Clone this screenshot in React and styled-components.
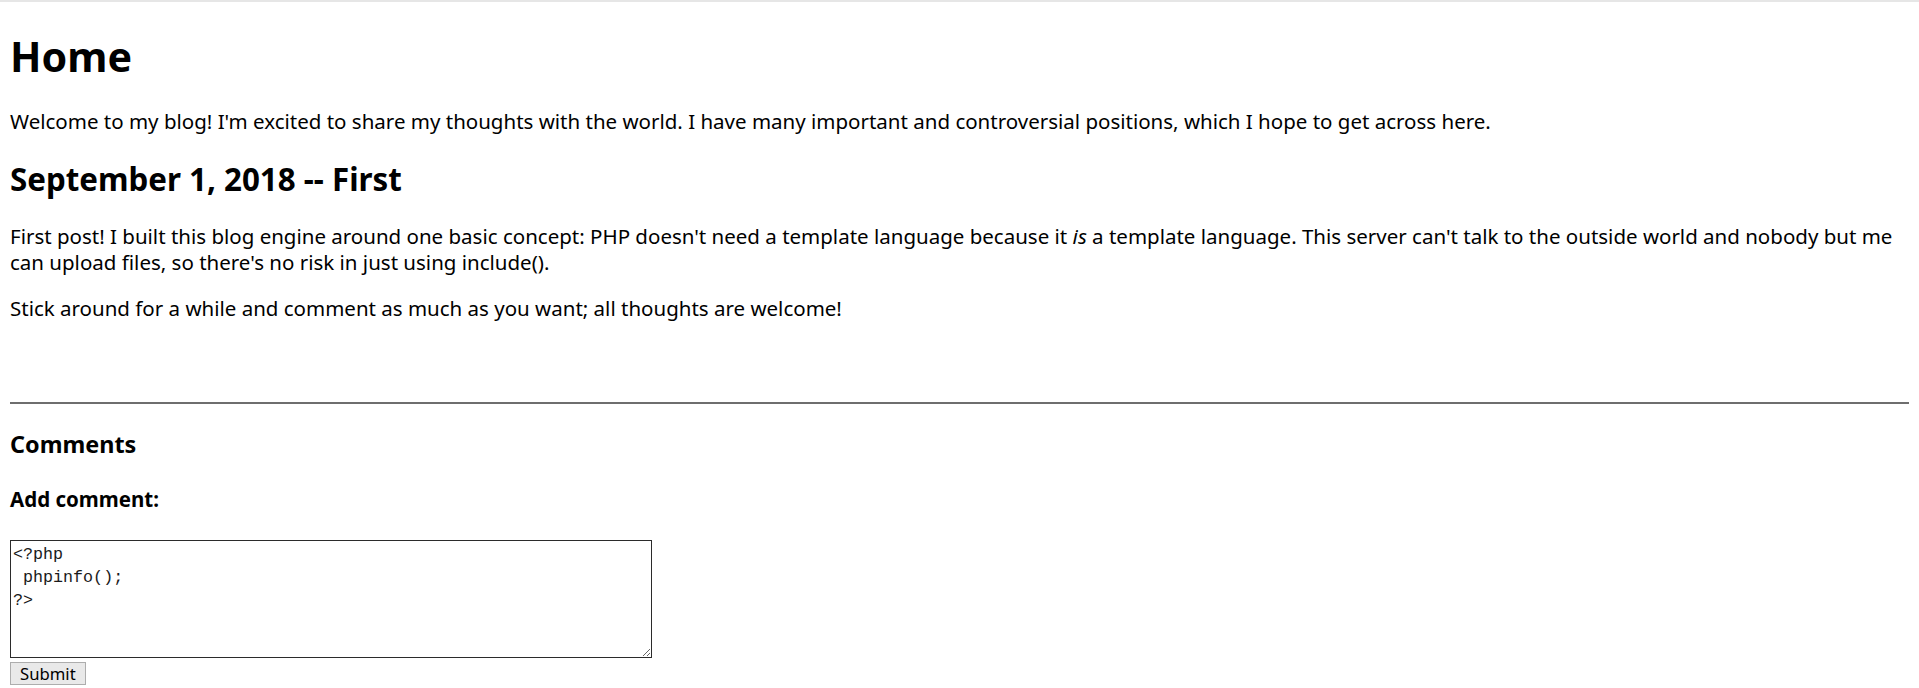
import React from "react";
import styled, { createGlobalStyle } from "styled-components";

const GlobalStyle = createGlobalStyle`
  html, body {
    margin: 0;
    padding: 0;
    background: #ffffff;
  }
  body {
    font-family: "Noto Sans", "Open Sans", sans-serif;
    font-size: 20.5px;
    color: #000000;
  }
`;

const TopEdge = styled.div`
  height: 2px;
  background: #e6e6e6;
`;

const Page = styled.div`
  padding: 0 10px 10px;
  display: flow-root;
`;

const Title = styled.h1`
  font-size: 41.2px;
  line-height: 52px;
  font-weight: 700;
  margin: 28px 0 26px;
`;

const PostTitle = styled.h2`
  font-size: 31.3px;
  line-height: 40px;
  font-weight: 700;
  margin: 25px 0 24px;
`;

const Text = styled.p`
  font-size: 20.5px;
  line-height: 26px;
  margin: 20px 0;
`;

const Divider = styled.hr`
  border: 0;
  border-top: 2px solid #6e6e6e;
  margin: 81px 0 25px;
  height: 0;
`;

const SectionTitle = styled.h3`
  font-size: 23.4px;
  line-height: 30px;
  font-weight: 700;
  margin: 25px 0 27px;
`;

const FormTitle = styled.h4`
  font-size: 20.5px;
  line-height: 26px;
  font-weight: 700;
  margin: 27px 0 28px;
`;

const CommentForm = styled.form`
  display: flex;
  flex-direction: column;
  align-items: flex-start;
  gap: 4px;
`;

const CodeBox = styled.textarea`
  box-sizing: border-box;
  width: 642px;
  height: 118px;
  margin: 0;
  padding: 2px 2px;
  border: 1px solid #2b2b2b;
  font-family: "Liberation Mono", monospace;
  font-size: 16.7px;
  line-height: 23px;
  color: #1a1a1a;
  outline: none;
  resize: both;
`;

const SubmitButton = styled.button`
  box-sizing: border-box;
  height: 23px;
  padding: 0 9px;
  font-family: "Noto Sans", "Open Sans", sans-serif;
  font-size: 16.7px;
  line-height: 20px;
  color: #000;
  background: #e9e9e9;
  border: 1px solid #adadad;
  border-radius: 0;
`;

const code = `<?php
 phpinfo();
?>`;

export default function App() {
  const placeCaret = (e) => {
    const end = e.target.value.length;
    e.target.setSelectionRange(end, end);
  };

  return (
    <>
      <GlobalStyle />
      <TopEdge />
      <Page>
        <Title>Home</Title>
        <Text>
          Welcome to my blog! I'm excited to share my thoughts with the world.
          I have many important and controversial positions, which I hope to
          get across here.
        </Text>

        <PostTitle>September 1, 2018 -- First</PostTitle>
        <Text>
          First post! I built this blog engine around one basic concept: PHP
          doesn't need a template language because it <em>is</em> a template
          language. This server can't talk to the outside world and nobody but
          me can upload files, so there's no risk in just using include().
        </Text>
        <Text>
          Stick around for a while and comment as much as you want; all
          thoughts are welcome!
        </Text>

        <Divider />
        <SectionTitle>Comments</SectionTitle>
        <FormTitle>Add comment:</FormTitle>
        <CommentForm onSubmit={(e) => e.preventDefault()}>
          <CodeBox
            defaultValue={code}
            autoFocus
            onFocus={placeCaret}
            spellCheck={false}
          />
          <SubmitButton type="submit">Submit</SubmitButton>
        </CommentForm>
      </Page>
    </>
  );
}
